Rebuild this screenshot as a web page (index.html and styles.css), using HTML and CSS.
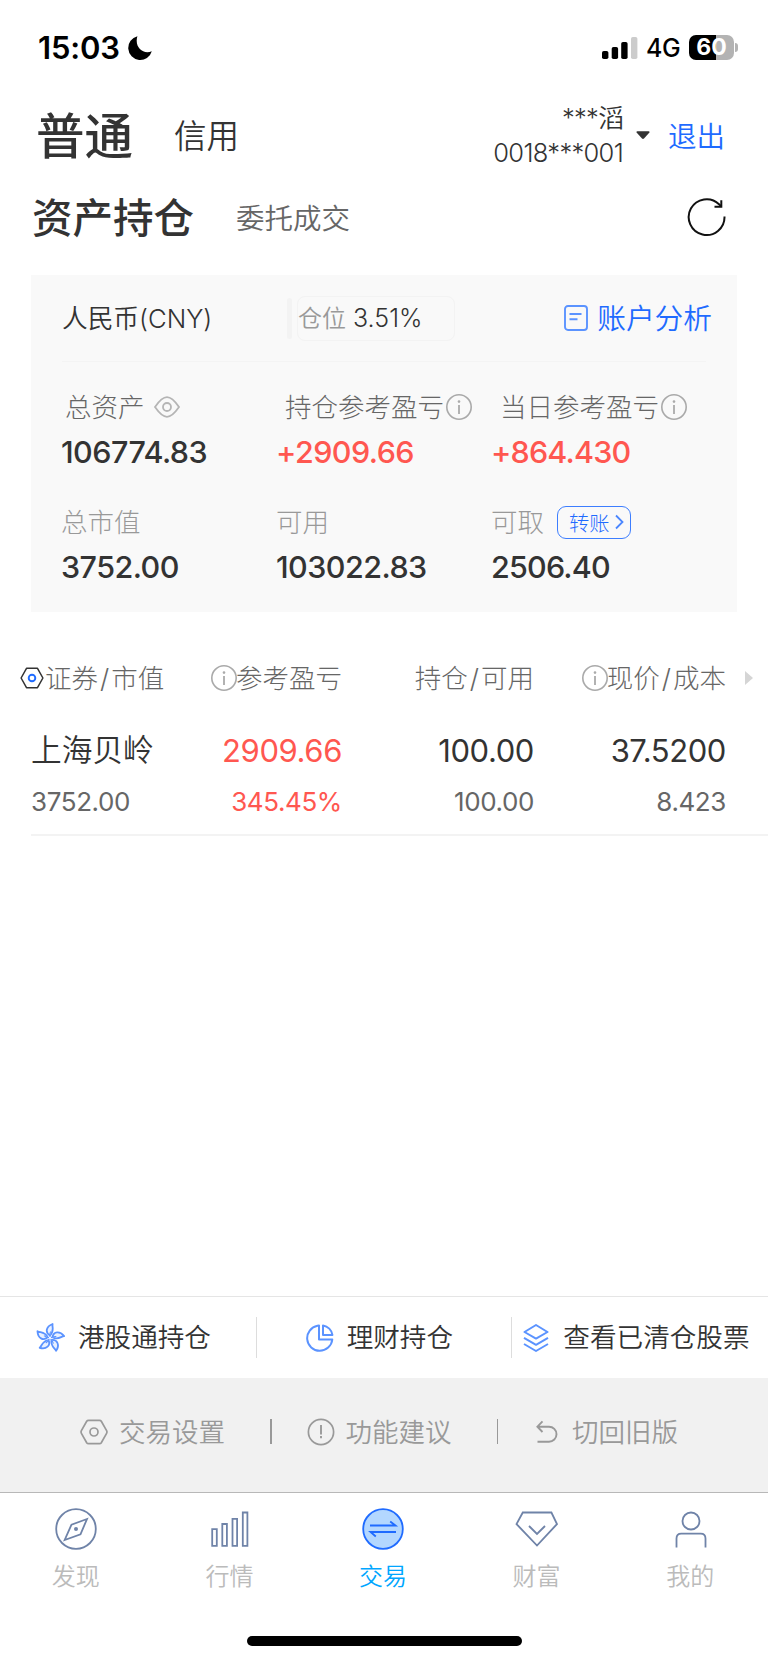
FILE: index.html
```
<!DOCTYPE html>
<html lang="zh-CN">
<head>
  <meta charset="UTF-8" />
  <meta name="viewport" content="width=device-width, initial-scale=1.0" />
  <title>资产持仓</title>
  <link rel="stylesheet" href="styles.css">
</head>
<body>
  <!-- shared icons -->
  <svg class="defs" width="0" height="0">
    <symbol id="info" viewBox="0 0 26 26">
      <circle cx="13" cy="13" r="12.2" fill="none" stroke="#aaa" stroke-width="1.6" />
      <path d="M13 11v9" stroke="#aaa" stroke-width="1.8" />
      <circle cx="13" cy="7.6" r="1.3" fill="#aaa" />
    </symbol>
  </svg>

  <div class="status">
    <span class="time">15:03</span>
    <svg class="moon" width="24" height="24" viewBox="0 0 24 24"><path d="M9.4.3A12 12 0 1 0 23.8 15.2 C15.5 19 6 11.5 9.4.3z" fill="#000" /></svg>
    <svg class="signal" width="36" height="22" viewBox="0 0 36 22">
      <rect x="0" y="14" width="6.4" height="8" rx="1.8" />
      <rect x="9.7" y="10" width="6.4" height="12" rx="1.8" />
      <rect x="19.2" y="5" width="6.4" height="17" rx="1.8" />
      <rect x="29" y="0" width="6.4" height="22" rx="1.8" fill="#ccc" />
    </svg>
    <span class="net">4G</span>
    <div class="battery">60</div>
    <div class="battery-tip"></div>
  </div>

  <div class="account">
    <span class="type active">普通</span>
    <span class="type">信用</span>
    <div class="user">
      <div>***滔</div>
      <div>0018***001</div>
    </div>
    <svg class="caret" width="14" height="9" viewBox="0 0 14 9"><path d="M1.4.2h11.2q1.6.2.6 1.6L8 7.6q-1 .9-2 0L.8 1.8Q-.2.4 1.4.2z" fill="#333" /></svg>
    <a class="logout">退出</a>
  </div>

  <div class="subnav">
    <span class="sub active">资产持仓</span>
    <span class="sub">委托成交</span>
    <svg class="refresh" width="40" height="40" viewBox="0 0 40 40" fill="none" stroke="#111" stroke-width="2">
      <path d="M38.500 19.5A17.9 17.9 0 1 1 33 7.2L35.500 9.6" />
      <path d="M35.300 3.2v6.600h-6.800" />
    </svg>
  </div>

  <div class="card">
    <div class="card-head">
      <span class="currency">人民币(CNY)</span>
      <i class="bar"></i>
      <div class="position"><span>仓位</span> 3.51%</div>
      <a class="analysis">
        <svg width="24" height="26" viewBox="0 0 24 26" fill="none" stroke="#5b93ff" stroke-width="1.9">
          <rect x="1" y="1" width="22" height="24" rx="3" />
          <path d="M5.5 9h12M5.5 14.3h8" />
        </svg>
        <span>账户分析</span>
      </a>
    </div>
    <div class="grid">
      <div class="cell">
        <div class="label dark first"><span>总资产</span>
          <svg class="eye" width="26" height="22" viewBox="0 0 26 22" fill="none" stroke="#b5b5b5" stroke-width="1.8"><path d="M1 11C5.5 4.5 9 1.2 13 1.2S20.5 4.5 25 11C20.5 17.5 17 20.8 13 20.8S5.5 17.5 1 11z" /><circle cx="13" cy="11" r="4" /></svg>
        </div>
        <div class="value">106774.83</div>
      </div>
      <div class="cell">
        <div class="label dark"><span>持仓参考盈亏</span><svg class="info"><use href="#info" /></svg></div>
        <div class="value red">+2909.66</div>
      </div>
      <div class="cell">
        <div class="label dark"><span>当日参考盈亏</span><svg class="info"><use href="#info" /></svg></div>
        <div class="value red last">+864.430</div>
      </div>
      <div class="cell">
        <div class="label"><span>总市值</span></div>
        <div class="value">3752.00</div>
      </div>
      <div class="cell">
        <div class="label"><span>可用</span></div>
        <div class="value">103022.83</div>
      </div>
      <div class="cell">
        <div class="label"><span>可取</span>
          <a class="transfer">转账<svg width="9" height="16" viewBox="0 0 9 16" fill="none" stroke="#4a86ff" stroke-width="1.8"><path d="M1 1.5l6.500 6.500L1 14.500" /></svg></a>
        </div>
        <div class="value last">2506.40</div>
      </div>
    </div>
  </div>

  <div class="holdings">
    <div class="row head">
      <span class="col name"><svg class="hex" width="24" height="22" viewBox="0 0 24 22" fill="none" stroke="#333" stroke-width="1.5"><path d="M6.500 1.300h11L22.900 11l-5.400 9.700h-11L1.100 11z" stroke-linejoin="round" /><circle cx="12" cy="11" r="3.300" stroke="#1f6bff" stroke-width="1.900" /></svg><span>证券<b>/</b>市值</span></span>
      <span class="col"><svg class="info"><use href="#info" /></svg><span>参考盈亏</span></span>
      <span class="col"><span>持仓<b>/</b>可用</span></span>
      <span class="col"><svg class="info"><use href="#info" /></svg><span>现价<b>/</b>成本</span></span>
      <i class="more"></i>
    </div>
    <div class="row main">
      <span class="col name">上海贝岭</span>
      <span class="col red">2909.66</span>
      <span class="col">100.00</span>
      <span class="col">37.5200</span>
    </div>
    <div class="row minor">
      <span class="col name">3752.00</span>
      <span class="col red">345.45%</span>
      <span class="col">100.00</span>
      <span class="col">8.423</span>
    </div>
  </div>

  <div class="shortcuts">
    <a class="shortcut hk">
      <svg width="30" height="30" viewBox="-15 -15 30 30" fill="#e8f0ff" stroke="#5b93ff" stroke-width="1.8" stroke-linejoin="round">
        <g id="petal"><path d="M0 -2.500C-5.200 -5.500 -4 -11.500 2.600 -14C1.800 -11 4.800 -7 0 -2.500z" /><path d="M0 -1Q-.5 -4 .5 -6.500" stroke-width="1" /></g>
        <use href="#petal" transform="rotate(72)" />
        <use href="#petal" transform="rotate(144)" />
        <use href="#petal" transform="rotate(216)" />
        <use href="#petal" transform="rotate(288)" />
      </svg>
      <span>港股通持仓</span>
    </a>
    <a class="shortcut wealth">
      <svg width="28" height="28" viewBox="0 0 28 28" fill="none" stroke="#5b93ff" stroke-width="2">
        <path d="M11.500 1.800A12.600 12.600 0 1 0 26.300 15.500H13V1.500z" stroke-linejoin="round" />
        <path d="M17 1.500v9.400h9.400A11 11 0 0 0 17 1.500z" stroke-linejoin="round" />
      </svg>
      <span>理财持仓</span>
    </a>
    <a class="shortcut cleared">
      <svg width="26" height="28" viewBox="0 0 26 28" fill="none" stroke="#5b93ff" stroke-width="2" stroke-linejoin="round">
        <path d="M13 1L24.500 8 13 14.600 1.500 8z" />
        <path d="M1 13.800l12 7 12-7M1 20l12 7 12-7" />
      </svg>
      <span>查看已清仓股票</span>
    </a>
  </div>

  <div class="tools">
    <a class="tool setting">
      <svg width="28" height="26" viewBox="0 0 28 26" fill="none" stroke="#999" stroke-width="1.7"><path d="M8.500 1.300h11q1.200 0 1.800 1l5.300 9.400q.7 1.300 0 2.600l-5.300 9.400q-.6 1-1.800 1h-11q-1.200 0-1.800-1L1.400 14.300q-.7-1.300 0-2.600l5.300-9.400q.6-1 1.800-1z" /><circle cx="14" cy="13" r="4" /></svg>
      <span>交易设置</span>
    </a>
    <i></i>
    <a class="tool advice">
      <svg width="28" height="28" viewBox="0 0 28 28" fill="none" stroke="#999" stroke-width="1.7"><circle cx="14" cy="14" r="12.6" /><path d="M14 7v9.500M14 18v2.200" stroke-width="1.9" /></svg>
      <span>功能建议</span>
    </a>
    <i></i>
    <a class="tool back">
      <svg width="22" height="24" viewBox="0 0 22 24" fill="none" stroke="#999" stroke-width="1.9"><path d="M6.500 1.300L1.400 6.700l5.100 5.300M1.400 6.700H13a7.500 7.500 0 0 1 0 15H1.500" /></svg>
      <span>切回旧版</span>
    </a>
  </div>

  <div class="tabbar">
    <a class="tab">
      <svg viewBox="0 0 44 44"><circle cx="22" cy="22" r="19.8" /><path d="M33 12L17.500 17.600 10.700 33 26.500 27.300z" /><circle cx="22" cy="22" r="2" fill="#6f83a8" stroke="none" /></svg>
      <span>发现</span>
    </a>
    <a class="tab">
      <svg viewBox="0 0 44 44"><path d="M4.200 22.200h4.600v16.600H4.200zM14.300 17h4.600v21.800h-4.600zM24.500 11.800h4.600v27h-4.600zM34.800 5.500h4.600v33.300h-4.600z" /></svg>
      <span>行情</span>
    </a>
    <a class="tab active">
      <svg viewBox="0 0 44 44"><circle cx="22" cy="22" r="19.8" /><path d="M9 18.500h25.500l-5.300-4M35 25H9.500l5.300 4.500" /></svg>
      <span>交易</span>
    </a>
    <a class="tab">
      <svg viewBox="0 0 44 44"><path d="M7.800 5.500h28.600L42 17 22 38.500 1.500 17z" /><path d="M14 19l8 8 8-8" /></svg>
      <span>财富</span>
    </a>
    <a class="tab">
      <svg viewBox="0 0 44 44"><circle cx="22" cy="14" r="8.5" /><path d="M7.500 40.500V31.500q0-4.800 4.800-4.800h19.400q4.800 0 4.800 4.800v9" /></svg>
      <span>我的</span>
    </a>
  </div>
  <div class="home"></div>
</body>
</html>
```
FILE: styles.css
```
* {
  box-sizing: border-box;
}
body {
  margin: 0;
  width: 768px;
  height: 1663px;
  display: flex;
  flex-direction: column;
  overflow: hidden;
  background: #fff;
  color: #333;
  font-family: Inter, "Noto Sans CJK SC", sans-serif;
  font-weight: 350;
  white-space: nowrap;
}
svg {
  flex: none;
  display: block;
}
.defs {
  position: absolute;
}
.red {
  color: #ff5750;
}
.info {
  width: 26px;
  height: 26px;
}

/* status bar */
.status {
  height: 95px;
  padding: 0 30px 0 38px;
  display: flex;
  align-items: center;
  color: #000;
}
.time {
  width: 90px;
  padding-bottom: 1px;
  font-size: 31px;
  font-weight: 600;
  letter-spacing: -0.2px;
}
.signal {
  margin-left: auto;
}
.net {
  width: 43px;
  margin-left: 8px;
  font-size: 25px;
  font-weight: 500;
  letter-spacing: -0.5px;
}
.battery {
  width: 45px;
  height: 25px;
  border-radius: 7px;
  background: linear-gradient(90deg, #000 60%, #b3b3b3 60%);
  color: #fff;
  font-size: 23px;
  line-height: 25px;
  font-weight: 700;
  text-align: center;
}
.battery-tip {
  width: 3px;
  height: 9px;
  margin-left: 1px;
  border-radius: 0 4px 4px 0;
  background: #b3b3b3;
}

/* account row */
.account {
  height: 82px;
  padding: 0 43px 2px 36px;
  display: flex;
  align-items: center;
}
.type {
  padding-bottom: 3px;
  margin-left: 41px;
  font-size: 32.5px;
}
.type.active {
  padding-bottom: 4px;
  margin-left: 0;
  font-size: 48.5px;
  font-weight: 500;
}
.user {
  margin-left: auto;
  text-align: right;
  font-size: 25.5px;
  line-height: 35px;
  letter-spacing: -0.7px;
}
.caret {
  margin: 0 18px 0 13px;
}
.logout {
  padding-bottom: 2px;
  color: #1f6bff;
  font-size: 28.5px;
}

/* page switch */
.subnav {
  height: 98px;
  padding: 0 42px 18px 32px;
  display: flex;
  align-items: center;
}
.sub {
  padding-bottom: 2px;
  margin-left: 42px;
  color: #666;
  font-size: 28.5px;
}
.sub.active {
  padding-bottom: 3px;
  margin-left: 0;
  color: #333;
  font-size: 40.5px;
  font-weight: 500;
}
.refresh {
  margin-left: auto;
}

/* assets card */
.card {
  height: 337px;
  margin: 0 31px;
  background: #f9f9f9;
}
.card-head {
  height: 87px;
  margin: 0 31px;
  border-bottom: 1px solid #f4f4f4;
  display: flex;
  align-items: center;
  font-size: 24px;
}
.currency {
  width: 225px;
  padding-bottom: 3px;
  font-size: 25.7px;
}
.bar {
  width: 5px;
  height: 41px;
  border-radius: 3px;
  background: #f3f3f3;
}
.position {
  width: 158px;
  height: 45px;
  margin-left: 5px;
  border: 1px solid #f3f3f3;
  border-radius: 8px;
  font-size: 25px;
  line-height: 42px;
}
.position span {
  color: #999;
  font-size: 24px;
}
.analysis {
  margin-left: auto;
  margin-right: -6px;
  display: flex;
  align-items: center;
  gap: 9px;
  color: #1f6bff;
  font-size: 28.7px;
}
.analysis span {
  padding-bottom: 3px;
}
.grid {
  padding: 25px 0 0 30px;
  display: grid;
  grid-template-columns: repeat(3, 215px);
  grid-auto-rows: 115px;
}
.label {
  height: 40px;
  display: flex;
  align-items: center;
  color: #999;
  font-size: 26.5px;
  font-weight: 300;
}
.label span {
  padding-bottom: 3px;
}
.label.dark {
  padding-left: 9px;
  color: #666;
}
.label.first {
  padding-left: 4px;
}
.eye {
  margin-left: 9px;
}
.label .info {
  margin-left: 2px;
}
.value {
  height: 50px;
  line-height: 50px;
  font-size: 30.5px;
  font-weight: 500;
  letter-spacing: -0.55px;
}
.value.last {
  letter-spacing: -0.8px;
}
.transfer {
  width: 74px;
  height: 33px;
  margin-left: 13px;
  padding-left: 11px;
  border: 1.5px solid #3d7eff;
  border-radius: 9px;
  display: flex;
  align-items: center;
  gap: 5px;
  color: #1f6bff;
  font-size: 20.3px;
}

/* holdings list */
.holdings {
  height: 224px;
  margin-left: 31px;
  padding-top: 43px;
  border-bottom: 2px solid #f3f3f3;
}
.row {
  display: flex;
  align-items: center;
}
.col {
  width: 192px;
  display: flex;
  align-items: center;
  justify-content: flex-end;
}
.col.name {
  width: 119px;
  justify-content: flex-start;
}
.head {
  height: 46px;
  color: #666;
  font-size: 26.5px;
  font-weight: 300;
}
.head .col span {
  padding-bottom: 3px;
}
.head .col .info {
  margin-right: -1px;
}
.head b {
  margin: 0 2px;
  font-weight: 300;
}
.hex {
  margin: 0 1px 0 -11px;
}
.more {
  margin-left: 19px;
  border-left: 8px solid #d5d5d5;
  border-top: 7px solid transparent;
  border-bottom: 7px solid transparent;
}
.main {
  height: 98px;
  padding-top: 1px;
  font-size: 31px;
  font-weight: 400;
  letter-spacing: -0.4px;
}
.main .name {
  padding-bottom: 7px;
  font-size: 30.7px;
  font-weight: 350;
  letter-spacing: 0;
}
.minor {
  height: 4px;
  color: #666;
  font-size: 26px;
  font-weight: 400;
  letter-spacing: -0.4px;
}

/* shortcuts above the footer */
.shortcuts {
  height: 82px;
  margin-top: auto;
  border-top: 1px solid #e5e5e5;
  display: flex;
  align-items: center;
}
.shortcut {
  width: 256px;
  height: 41px;
  border-right: 1px solid #ddd;
  display: flex;
  align-items: center;
  font-size: 26.6px;
}
.shortcut span {
  padding-bottom: 4px;
}
.tool span {
  padding-bottom: 3px;
}
.shortcut:last-child {
  border-right: 0;
}
.hk {
  width: 257px;
  padding-left: 35px;
  gap: 13px;
}
.wealth {
  padding-left: 49px;
  gap: 13px;
}
.cleared {
  padding-left: 11px;
  gap: 14px;
}

.tools {
  height: 114px;
  padding: 0 0 7px 80px;
  display: flex;
  align-items: center;
  background: #f1f1f1;
  color: #999;
  font-size: 26.5px;
}
.tools i {
  width: 1.5px;
  height: 25px;
  background: #999;
}
.tool {
  width: 190px;
  display: flex;
  align-items: center;
  gap: 11px;
}
.advice {
  width: 225px;
  padding-left: 35px;
}
.back {
  width: 220px;
  padding-left: 38px;
  gap: 14px;
}

/* bottom tabs */
.tabbar {
  height: 144px;
  border-top: 1px solid #b8b8b8;
  padding-top: 14px;
  display: flex;
}
.tab {
  flex: 1;
  display: flex;
  flex-direction: column;
  align-items: center;
  color: #bbb;
  font-size: 24px;
}
.tab svg {
  width: 44px;
  height: 44px;
  margin-right: 1px;
  fill: none;
  stroke: #6f83a8;
  stroke-width: 1.8;
}
.tab span {
  margin: 10px 2px 0 0;
  line-height: 32px;
}
.tab.active {
  color: #00a6ff;
}
.tab.active svg {
  stroke: #1f6bff;
}
.tab.active circle {
  fill: #b3d7ff;
}
.home {
  width: 275px;
  height: 10px;
  margin: 0 auto 17px;
  border-radius: 5px;
  background: #000;
}
```
